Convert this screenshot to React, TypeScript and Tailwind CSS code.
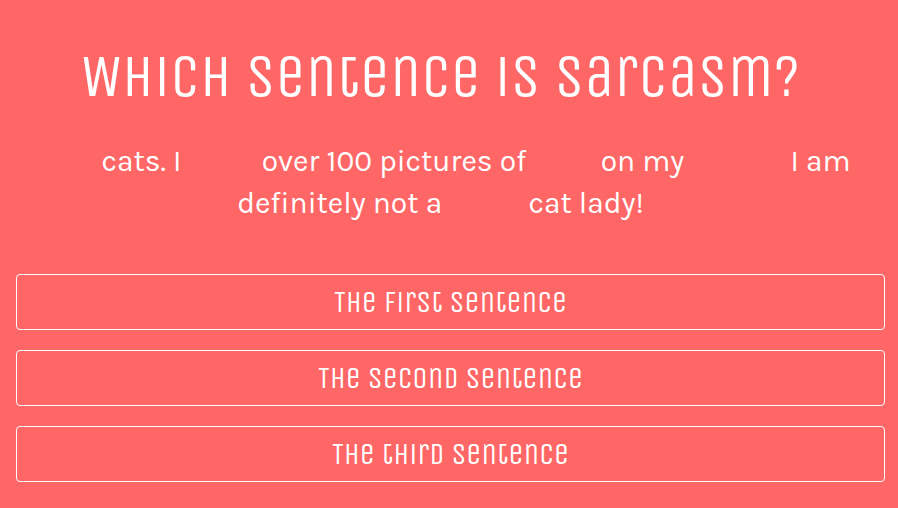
import type { ReactNode } from "react";

const answers = ["The first sentence", "The second sentence", "The third sentence"];

const displayFont = "font-['Unica_One','Roboto','Liberation_Sans',sans-serif]";
const bodyFont = "font-['Karla','Inter','Liberation_Sans',sans-serif]";

function Blank({ className }: { className: string }): ReactNode {
  return <span aria-hidden="true" className={`inline-block ${className}`} />;
}

export default function App() {
  return (
    <main className="min-h-screen bg-[#ff6666] pt-10 pr-[13px] pb-6 pl-4 text-center text-white">
      <div className="pr-5">
        <h1 className={`${displayFont} text-[60px] leading-[74px] font-normal`}>
          Which sentence is sarcasm?
        </h1>
        <p className={`${bodyFont} mt-[26px] text-[30px] leading-[42px]`}>
          <Blank className="w-16" /> <span>cats. I</span> <Blank className="w-[66px]" />{" "}
          <span>over 100 pictures of</span> <Blank className="w-[60px]" /> <span>on my</span>{" "}
          <Blank className="w-[92px]" /> <span>I am</span> <span>definitely not a</span>{" "}
          <Blank className="w-[72px]" /> <span>cat lady!</span>
        </p>
      </div>
      <div className="mt-[50px] flex flex-col gap-5">
        {answers.map((answer) => (
          <button
            key={answer}
            type="button"
            className={`${displayFont} h-14 w-full cursor-pointer rounded border border-white text-[30px] font-normal`}
          >
            {answer}
          </button>
        ))}
      </div>
    </main>
  );
}
